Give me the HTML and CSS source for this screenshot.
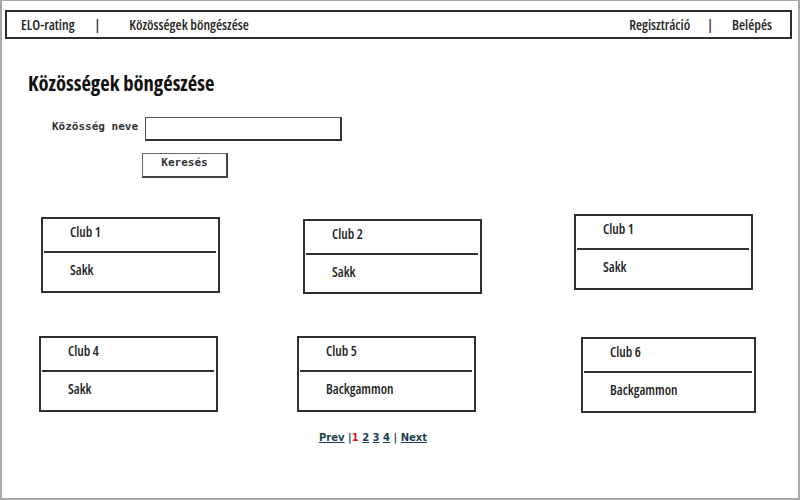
FILE: index.html
```html
<!DOCTYPE html>
<html lang="hu">
<head>
<meta charset="utf-8">
<title>Közösségek böngészése</title>
<link rel="stylesheet" href="styles.css">
</head>
<body>
<div class="frame">
  <nav class="nav">
    <div class="nav-left">
      <span class="nav-item brand">ELO-rating</span>
      <span class="nav-sep">|</span>
      <span class="nav-item browse">Közösségek böngészése</span>
    </div>
    <div class="nav-right">
      <span class="nav-item">Regisztráció</span>
      <span class="nav-sep sep-right">|</span>
      <span class="nav-item">Belépés</span>
    </div>
  </nav>

  <h1 class="title">Közösségek böngészése</h1>

  <form class="search">
    <div class="search-row">
      <label class="search-label">Közösség neve</label>
      <div class="search-input"></div>
    </div>
    <div class="search-btn">Keresés</div>
  </form>

  <div class="cards">
    <div class="card c1"><div class="card-head">Club 1</div><div class="card-line"></div><div class="card-body">Sakk</div></div>
    <div class="card c2"><div class="card-head">Club 2</div><div class="card-line"></div><div class="card-body">Sakk</div></div>
    <div class="card c3"><div class="card-head">Club 1</div><div class="card-line"></div><div class="card-body">Sakk</div></div>
    <div class="card c4"><div class="card-head">Club 4</div><div class="card-line"></div><div class="card-body">Sakk</div></div>
    <div class="card c5"><div class="card-head">Club 5</div><div class="card-line"></div><div class="card-body">Backgammon</div></div>
    <div class="card c6"><div class="card-head">Club 6</div><div class="card-line"></div><div class="card-body">Backgammon</div></div>
  </div>

  <div class="pager">
    <a class="pg">Prev</a> |<a class="pg current">1</a> <a class="pg">2</a> <a class="pg">3</a> <a class="pg">4</a> | <a class="pg">Next</a>
  </div>
</div>
</body>
</html>
```

FILE: styles.css
```css
* { box-sizing: border-box; }
html, body { margin: 0; padding: 0; background: #fff; }
body {
  font-family: "Open Sans", "Liberation Sans", sans-serif;
  font-stretch: 75%;
  color: #222;
}
.frame {
  width: 800px;
  height: 500px;
  border: 2px solid #a9a9a9;
  border-top-width: 1px;
  padding-top: 9px;
  overflow: hidden;
}
.nav {
  margin-left: 3px;
  width: 787px;
  height: 29px;
  border: 2px solid #2d2d2d;
  display: flex;
  justify-content: space-between;
  align-items: center;
  font-size: 14px;
  font-weight: 600;
  color: #262626;
  padding: 0 18px 1px 14px;
}
.nav-left, .nav-right { display: flex; align-items: center; }
.nav-sep { font-weight: 600; color: #333; }
.brand { margin-right: 20px; }
.browse { margin-left: 29px; }
.sep-right { margin: 0 19px 0 17px; }

.title {
  margin: 31px 0 0 26px;
  font-size: 20.6px;
  font-weight: 700;
  color: #111;
  line-height: 26px;
}

.search { margin: 21px 0 0 0; }
.search-row { display: flex; align-items: center; }
.search-label {
  margin-left: 50px;
  width: 93px;
  font-family: "DejaVu Sans Mono", monospace;
  font-stretch: normal;
  font-weight: bold;
  font-size: 11px;
  color: #333;
  position: relative;
  top: -3px;
}
.search-input {
  width: 197px;
  height: 24px;
  border: 1px solid #555;
  border-right: 2px solid #333;
  border-bottom: 2px solid #333;
  background: #fff;
}
.search-btn {
  margin: 12px 0 0 140px;
  width: 86px;
  height: 25px;
  border: 1px solid #666;
  border-right: 2px solid #444;
  border-bottom: 2px solid #444;
  font-family: "DejaVu Sans Mono", monospace;
  font-stretch: normal;
  font-weight: bold;
  font-size: 11px;
  color: #333;
  text-align: center;
  line-height: 17px;
}

.cards {
  margin: 36px 0 0 37px;
  display: grid;
  grid-template-columns: 258px 277px 182px;
  row-gap: 42px;
  align-items: start;
}
.card {
  width: 179px;
  height: 76px;
  border: 2px solid #2f2f2f;
  font-size: 13.6px;
  font-weight: 600;
  color: #222;
}
.card-head {
  height: 32px;
  padding: 4px 0 0 27px;
  line-height: 18px;
}
.card-line {
  height: 2px;
  background: #333;
  margin: 0 2px 0 1px;
}
.card-body {
  padding: 8px 0 0 27px;
  line-height: 18px;
}
.c1 { margin: 3px 0 0 2px; }
.c2 { margin: 5px 0 0 6px; height: 75px; }
.c3 { margin: 0; }
.c4 { margin: 0; }
.c5 { margin: 0; }
.c6 { margin: 1px 0 0 7px; width: 175px; }

.pager {
  margin: 19px 0 0 317px;
  font-family: "DejaVu Sans", "Verdana", sans-serif;
  font-stretch: normal;
  font-weight: bold;
  font-size: 10px;
  color: #1b3f4f;
}
.pg { color: #1b3f4f; text-decoration: underline; }
.pg.current { color: #e0141e; text-decoration: none; }
```
